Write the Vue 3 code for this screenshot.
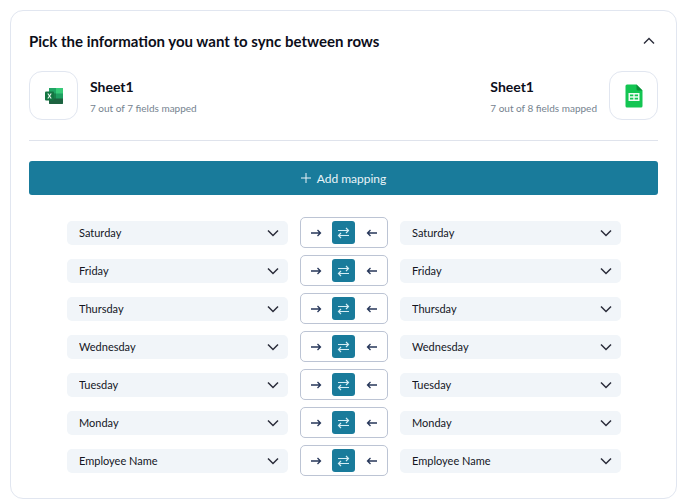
<script setup>
import { ref } from 'vue'

const open = ref(true)
const fields = ['Saturday', 'Friday', 'Thursday', 'Wednesday', 'Tuesday', 'Monday', 'Employee Name']
const directions = [
  { id: 'right', label: 'Sync left to right' },
  { id: 'both', label: 'Sync both ways' },
  { id: 'left', label: 'Sync right to left' }
]
const mappings = ref(fields.map((name) => ({ left: name, right: name, direction: 'both' })))

function addMapping() {
  mappings.value.unshift({ left: fields[0], right: fields[0], direction: 'both' })
}
</script>

<template>
  <main class="card">
    <header class="heading">
      <h1>Pick the information you want to sync between rows</h1>
      <button class="collapse" type="button" aria-label="Toggle section" :aria-expanded="open" @click="open = !open">
        <svg width="12" height="8" viewBox="0 0 12 8"><path d="M1 6.5 6 1.5l5 5" /></svg>
      </button>
    </header>

    <template v-if="open">
      <div class="sources">
        <section class="source">
          <div class="tile">
            <svg width="20" height="18" viewBox="0 0 20 18" aria-hidden="true">
              <rect x="5" y="1" width="14" height="16" rx="1" fill="#1f9f61" />
              <path d="M12 1h6a1 1 0 0 1 1 1v4.500h-7z" fill="#37cb78" />
              <path d="M5 1h7v5.500H5z" fill="#20a464" />
              <path d="M5 6.500h7V12H5z" fill="#17804a" />
              <path d="M5 11.500h14V16a1 1 0 0 1-1 1H6a1 1 0 0 1-1-1z" fill="#1d6240" />
              <rect x="1" y="4.500" width="9" height="9" rx="1" fill="#137541" />
              <path d="m3.800 6.500 3.400 5M7.200 6.500l-3.400 5" stroke="#e8f5ee" stroke-width="1.200" />
            </svg>
          </div>
          <div>
            <h2>Sheet1</h2>
            <p>7 out of 7 fields mapped</p>
          </div>
        </section>
        <section class="source">
          <div>
            <h2>Sheet1</h2>
            <p>7 out of 8 fields mapped</p>
          </div>
          <div class="tile">
            <svg width="18" height="24" viewBox="0 0 18 24" aria-hidden="true">
              <path d="M2 .5h9.500l6 6V22a1.500 1.500 0 0 1-1.500 1.500H2A1.500 1.500 0 0 1 .5 22V2A1.500 1.500 0 0 1 2 .5z" fill="#13c552" />
              <path d="M11.500.5 17.500 6.500h-4.500a1.500 1.500 0 0 1-1.500-1.500z" fill="#0b8f38" />
              <path d="M3.500 9h11v8h-11z" fill="#effbf3" />
              <path d="M5 10.500h3.300v1.800H5zM9.700 10.500H13v1.800H9.700zM5 13.700h3.300v1.800H5zM9.700 13.700H13v1.800H9.700z" fill="#13c552" />
            </svg>
          </div>
        </section>
      </div>

      <button class="add" type="button" @click="addMapping">
        <svg width="10" height="10" viewBox="0 0 10 10" aria-hidden="true"><path d="M5 0v10M0 5h10" /></svg>
        Add mapping
      </button>

      <ul class="mappings">
        <li v-for="(mapping, i) in mappings" :key="i" class="mapping">
          <div class="field">
            <select v-model="mapping.left" :aria-label="'Left field ' + (i + 1)">
              <option v-for="name in fields" :key="name">{{ name }}</option>
            </select>
            <svg width="12" height="8" viewBox="0 0 12 8" aria-hidden="true"><path d="M1 1.500l5 5 5-5" /></svg>
          </div>
          <div class="direction" role="group" aria-label="Sync direction">
            <button
              v-for="d in directions"
              :key="d.id"
              type="button"
              :class="{ active: mapping.direction === d.id }"
              :aria-label="d.label"
              :aria-pressed="mapping.direction === d.id"
              @click="mapping.direction = d.id"
            >
              <svg v-if="d.id === 'right'" width="12" height="8" viewBox="0 0 12 8"><path d="M1 4h9.500M7.500 1l3 3-3 3" /></svg>
              <svg v-else-if="d.id === 'left'" width="12" height="8" viewBox="0 0 12 8"><path d="M11 4H1.500M4.500 1l-3 3 3 3" /></svg>
              <svg v-else width="13" height="12" viewBox="0 0 13 12"><path d="M1 3.500h10.500M9 1l2.500 2.500L9 6M12 8.500H1.500M4 6 1.500 8.500 4 11" /></svg>
            </button>
          </div>
          <div class="field">
            <select v-model="mapping.right" :aria-label="'Right field ' + (i + 1)">
              <option v-for="name in fields" :key="name">{{ name }}</option>
            </select>
            <svg width="12" height="8" viewBox="0 0 12 8" aria-hidden="true"><path d="M1 1.500l5 5 5-5" /></svg>
          </div>
        </li>
      </ul>
    </template>
  </main>
</template>

<style>
body {
  background: #fff;
}
</style>

<style scoped>
.card {
  margin: 10px 6px 5px 10px;
  padding: 18px;
  border: 1px solid #e1e6f0;
  border-radius: 13px;
  color: #0c0e1a;
  font-family: Lato, "Liberation Sans", sans-serif;
}

h1,
h2,
p {
  margin: 0;
}

button {
  padding: 0;
  border: 0;
  background: none;
  font-family: inherit;
  cursor: pointer;
}

svg {
  display: block;
  fill: none;
}

.heading {
  display: flex;
  align-items: center;
  justify-content: space-between;
}

h1 {
  font-size: 15px;
  line-height: 24px;
  font-weight: 700;
}

.collapse {
  padding: 4px 3px;
}

.collapse svg {
  stroke: #2a2c3a;
  stroke-width: 1.4;
}

.sources {
  display: flex;
  justify-content: space-between;
  padding: 18px 0 20px;
  border-bottom: 1px solid #dfe3ec;
}

.source {
  display: flex;
  gap: 12px;
}

.tile {
  box-sizing: border-box;
  display: grid;
  place-items: center;
  width: 49px;
  height: 49px;
  border: 1px solid #e1e6f0;
  border-radius: 13px;
}

h2 {
  padding-top: 6px;
  font-size: 14px;
  line-height: 20px;
  font-weight: 700;
}

p {
  padding-top: 3px;
  color: #75838f;
  font-size: 10px;
  line-height: 16px;
}

.add {
  display: flex;
  align-items: center;
  justify-content: center;
  gap: 6px;
  width: 100%;
  height: 34px;
  margin-top: 20px;
  border-radius: 3px;
  background: #197b9b;
  color: #e9f4f8;
  font-size: 12px;
}

.add svg {
  stroke: #e9f4f8;
  stroke-width: 1;
}

.mappings {
  display: grid;
  gap: 7px;
  margin: 0;
  padding: 22px 37px 4px 38px;
  list-style: none;
}

.mapping {
  display: grid;
  grid-template-columns: 1fr 88px 1fr;
  align-items: center;
  gap: 12px;
}

.field {
  display: grid;
  align-items: center;
}

.field > * {
  grid-area: 1 / 1;
}

.field svg {
  justify-self: end;
  margin-right: 9px;
  stroke: #2a2c3a;
  stroke-width: 1.5;
  pointer-events: none;
}

select {
  appearance: none;
  width: 100%;
  height: 24px;
  padding: 0 24px 0 12px;
  border: 0;
  border-radius: 5px;
  background: #f1f5f9;
  color: #14161f;
  font-family: inherit;
  font-size: 11px;
}

.direction {
  box-sizing: border-box;
  display: flex;
  align-items: center;
  justify-content: space-between;
  height: 31px;
  padding: 0 4px 0 3px;
  border: 1px solid #bcc4d4;
  border-radius: 5px;
}

.direction button {
  display: grid;
  place-items: center;
  width: 23px;
  height: 23px;
  border-radius: 3px;
}

.direction svg {
  stroke: #27375a;
  stroke-width: 1.3;
}

.direction .active {
  background: #197b9b;
}

.direction .active svg {
  stroke: #d6edf4;
  stroke-width: 1.2;
}
</style>
